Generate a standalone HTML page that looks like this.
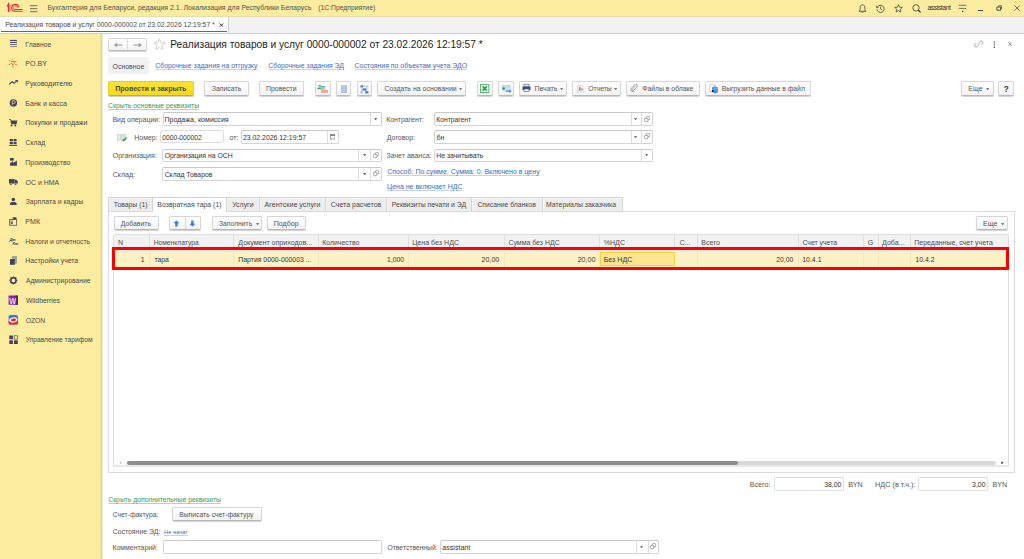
<!DOCTYPE html>
<html><head><meta charset="utf-8"><title>1C</title>
<style>
html,body{margin:0;padding:0;width:1024px;height:559px;overflow:hidden;background:#fff;}
body{position:relative;font-family:"Liberation Sans",sans-serif;}
div{position:absolute;box-sizing:border-box;}
.t{white-space:nowrap;line-height:1;}
.u{text-decoration:underline;text-decoration-thickness:0.6px;text-underline-offset:1.2px;}
.btn{background:linear-gradient(#ffffff,#f3f3f3);border:1px solid #d6d6d6;border-bottom-color:#b8b8b8;border-radius:2px;box-shadow:0 0.6px 0.8px rgba(0,0,0,0.18);}
.ybtn{background:linear-gradient(#fbe332,#f7da18);border:1px solid #ecd010;border-bottom-color:#cdb000;border-radius:2px;box-shadow:0 0.6px 0.8px rgba(0,0,0,0.2);}
.inp{background:#fff;border:1px solid #d3d3d3;border-top-color:#c9c9c9;border-radius:2px;}
.tab{background:#ededed;border:1px solid #d4d4d4;border-bottom:none;box-shadow:inset 1px 1px 0 #f6f6f6;}
</style></head><body>
<div style="left:0px;top:0px;width:1024px;height:16px;background:#fbec9f"></div>
<svg style="position:absolute;left:4px;top:2px" width="22" height="12" viewBox="0 0 22 12"><g fill="none" stroke="#e4262c">
<path d="M3.1 4.5L4.5 2.1V9.9" stroke-width="1.25"/><path d="M6.1 2.3V9.9" stroke-width="0.9" opacity="0.7"/>
<path d="M14.6 5.3A3.45 3.45 0 1 0 11.2 9.25" stroke-width="1.1"/><path d="M13.1 5.7A1.9 1.9 0 1 0 11 7.5" stroke-width="0.8" opacity="0.8"/>
<path d="M10.1 7.5H18.7M10.9 9.25H18.7" stroke-width="0.95"/></g></svg>
<svg style="position:absolute;left:30px;top:4.5px" width="8" height="8" viewBox="0 0 8 8"><path d="M0 0.7H7.5M0 3.7H7.5M0 6.7H7.5" stroke="#5e5e5e" stroke-width="0.9"/></svg>
<div class="t" style="left:47.44px;top:5px;font-size:6.962px;color:#4f4f4f;font-weight:normal;font-style:normal;">Бухгалтерия для Беларуси, редакция 2.1. Локализация для Республики Беларусь</div>
<div class="t" style="left:318.19px;top:5px;font-size:6.818px;color:#4f4f4f;font-weight:normal;font-style:normal;">(1С:Предприятие)</div>
<svg style="position:absolute;left:857.5px;top:4px" width="9" height="9" viewBox="0 0 9 9"><path d="M4.5 0.8C2.6 0.8 2.1 2.4 2.1 4.1V6L1 7.3H8L6.9 6V4.1C6.9 2.4 6.4 0.8 4.5 0.8Z" fill="none" stroke="#4a4a4a" stroke-width="0.85"/><path d="M3.6 8.2H5.4" stroke="#4a4a4a" stroke-width="0.9"/></svg>
<svg style="position:absolute;left:875.5px;top:4px" width="9" height="9" viewBox="0 0 9 9"><path d="M1.4 3.2A3.6 3.6 0 1 1 1 5.2" fill="none" stroke="#4a4a4a" stroke-width="0.85"/><path d="M0.6 1.6V3.6H2.6" fill="none" stroke="#4a4a4a" stroke-width="0.8"/><path d="M4.6 2.6V4.8L6 6" fill="none" stroke="#4a4a4a" stroke-width="0.85"/></svg>
<svg style="position:absolute;left:893.5px;top:3.6px" width="9" height="9" viewBox="0 0 9 9"><path d="M4.5 0.6L5.6 3.2L8.4 3.4L6.3 5.2L6.9 8L4.5 6.5L2.1 8L2.7 5.2L0.6 3.4L3.4 3.2Z" fill="none" stroke="#4a4a4a" stroke-width="0.8" stroke-linejoin="round"/></svg>
<svg style="position:absolute;left:911.5px;top:4px" width="9.5" height="9" viewBox="0 0 9.5 9"><circle cx="4" cy="3.9" r="3.2" fill="none" stroke="#4a4a4a" stroke-width="0.85"/><path d="M6.3 6.2L8.6 8.4" stroke="#2a2a2a" stroke-width="1.2"/></svg>
<div class="t" style="left:927.43px;top:5px;font-size:6.8px;color:#333333;font-weight:normal;font-style:normal;letter-spacing:-0.42px">assistant</div>
<svg style="position:absolute;left:957.5px;top:4px" width="9.5" height="8.5" viewBox="0 0 9.5 8.5"><path d="M0.8 1.3H8.3M0.8 4.4H8.3" stroke="#505050" stroke-width="0.8"/><rect x="4" y="6.8" width="1.4" height="1.1" fill="#3a3a3a"/></svg>
<div style="left:978.2px;top:9.8px;width:5px;height:0.9px;background:#444"></div>
<svg style="position:absolute;left:995.6px;top:5.4px" width="6.4" height="6" viewBox="0 0 6.4 6"><path d="M0.9 2H4.6V5.3H0.9Z" fill="none" stroke="#444" stroke-width="0.9"/><path d="M2.6 2V0.8H5.6V3.8H4.6" fill="none" stroke="#444" stroke-width="0.75"/></svg>
<svg style="position:absolute;left:1013.5px;top:5px" width="6.2" height="6.2" viewBox="0 0 6.2 6.2"><path d="M0.4 0.4L5.8 5.8M5.8 0.4L0.4 5.8" stroke="#555" stroke-width="0.85"/></svg>
<div style="left:0px;top:16px;width:1024px;height:17px;background:#f2f2f2"></div>
<div style="left:0px;top:33px;width:1024px;height:1px;background:#cfcfcf"></div>
<div style="left:0px;top:16px;width:229px;height:17px;background:#fff;border-right:1px solid #cfcfcf"></div>
<div style="left:0px;top:16px;width:1024px;height:1px;background:#e6deae"></div>
<div style="left:1px;top:30.8px;width:225.5px;height:1.2px;background:#16983f"></div>
<div class="t" style="left:5.25px;top:22px;font-size:6.839px;color:#4a4a4a;font-weight:normal;font-style:normal;">Реализация товаров и услуг 0000-000002 от 23.02.2026 12:19:57 *</div>
<svg style="position:absolute;left:219.4px;top:22.6px" width="4.8" height="4.4" viewBox="0 0 4.8 4.4"><path d="M0.4 0.4L4.4 4M4.4 0.4L0.4 4" stroke="#333" stroke-width="0.9"/></svg>
<div style="left:0px;top:34px;width:100px;height:525px;background:#fbec9f"></div>
<div style="left:100px;top:34px;width:1px;height:525px;background:#f1e290"></div>
<div style="left:101px;top:34px;width:1px;height:525px;background:#ddd6aa"></div>
<div style="left:102px;top:34px;width:1px;height:525px;background:#eeebdf"></div>
<div class="t" style="left:25.36px;top:42px;font-size:6.78px;color:#4a4a4a;font-weight:normal;font-style:normal;">Главное</div>
<div class="t" style="left:25.33px;top:61px;font-size:7.12px;color:#4a4a4a;font-weight:normal;font-style:normal;">PO.BY</div>
<div class="t" style="left:25.34px;top:80px;font-size:7.052px;color:#4a4a4a;font-weight:normal;font-style:normal;">Руководителю</div>
<div class="t" style="left:25.33px;top:101px;font-size:7.089px;color:#4a4a4a;font-weight:normal;font-style:normal;">Банк и касса</div>
<div class="t" style="left:25.34px;top:119px;font-size:7.014px;color:#4a4a4a;font-weight:normal;font-style:normal;">Покупки и продажи</div>
<div class="t" style="left:25.56px;top:140px;font-size:6.78px;color:#4a4a4a;font-weight:normal;font-style:normal;">Склад</div>
<div class="t" style="left:25.35px;top:160px;font-size:6.918px;color:#4a4a4a;font-weight:normal;font-style:normal;">Производство</div>
<div class="t" style="left:25.62px;top:180px;font-size:6.938px;color:#4a4a4a;font-weight:normal;font-style:normal;">ОС и НМА</div>
<div class="t" style="left:25.69px;top:199px;font-size:6.882px;color:#4a4a4a;font-weight:normal;font-style:normal;">Зарплата и кадры</div>
<div class="t" style="left:25.33px;top:219px;font-size:7.12px;color:#4a4a4a;font-weight:normal;font-style:normal;">РМК</div>
<div class="t" style="left:25.36px;top:239px;font-size:6.799px;color:#4a4a4a;font-weight:normal;font-style:normal;">Налоги и отчетность</div>
<div class="t" style="left:25.35px;top:258px;font-size:6.835px;color:#4a4a4a;font-weight:normal;font-style:normal;">Настройки учета</div>
<div class="t" style="left:25.90px;top:278px;font-size:6.79px;color:#4a4a4a;font-weight:normal;font-style:normal;">Администрирование</div>
<div class="t" style="left:25.90px;top:298px;font-size:6.84px;color:#4a4a4a;font-weight:normal;font-style:normal;">Wildberries</div>
<div class="t" style="left:25.63px;top:318px;font-size:6.78px;color:#4a4a4a;font-weight:normal;font-style:normal;">OZON</div>
<div class="t" style="left:25.77px;top:337px;font-size:6.664px;color:#4a4a4a;font-weight:normal;font-style:normal;">Управление тарифом</div>
<svg style="position:absolute;left:0;top:0" width="101" height="360" viewBox="0 0 101 360">
<g fill="none" stroke-linecap="butt">
<path d="M10 40.4H17" stroke="#45415a" stroke-width="1.05"/>
<path d="M10 42.45H17" stroke="#55506a" stroke-width="1.05"/>
<path d="M10 44.5H17" stroke="#6c6a72" stroke-width="1.05"/>
<path d="M10 46.55H17" stroke="#8c8e84" stroke-width="1.05"/>
</g>
<g fill="#e8483e">
<circle cx="12.6" cy="59.4" r="0.5"/><circle cx="9.4" cy="60.7" r="0.55"/><rect x="11" y="61.1" width="5.6" height="0.8"/>
<circle cx="11.3" cy="63.4" r="0.65"/><circle cx="14.4" cy="63.2" r="0.6"/><circle cx="9.4" cy="64.4" r="0.6"/>
<circle cx="12.6" cy="64.5" r="0.7"/><rect x="15.2" y="64" width="1.7" height="0.8"/><circle cx="12.6" cy="66.4" r="0.5"/>
</g>
<path d="M9.2 84.4L12.2 81.8L14.2 83.3L16.4 81.2" fill="none" stroke="#45415a" stroke-width="1.1"/>
<path d="M15 80.1H17.9V83Z" fill="#45415a"/>
<circle cx="13.4" cy="102.9" r="3.7" fill="#45415a"/>
<path d="M12.3 105.4V100.7H14A1.35 1.35 0 0 1 14 103.4H12.3" fill="none" stroke="#c9c7a8" stroke-width="0.85"/>
<path d="M9.2 119.5H10.6L11.2 120.6" fill="none" stroke="#45415a" stroke-width="0.9"/>
<path d="M10.3 120.4H17.4L16.5 124.2H11.2Z" fill="#45415a"/>
<circle cx="11.6" cy="125.5" r="0.95" fill="#45415a"/><circle cx="15.3" cy="125.5" r="0.95" fill="#45415a"/>
<rect x="9.7" y="138.9" width="3.2" height="2.3" rx="0.5" fill="#45415a"/><rect x="13.5" y="138.9" width="3.1" height="2.3" rx="0.5" fill="#45415a"/>
<rect x="9.7" y="141.9" width="3.2" height="2.3" rx="0.5" fill="#45415a"/><rect x="13.5" y="141.9" width="3.1" height="2.3" rx="0.5" fill="#45415a"/>
<rect x="9.2" y="145.1" width="7.8" height="0.9" fill="#45415a"/>
<rect x="10" y="158" width="3.7" height="2.6" fill="#45415a"/>
<path d="M10 165.7V163.2L13 160.9V162.9L16.9 160.6V165.7Z" fill="#45415a"/>
<path d="M9 179.1H14.6V183.6H9Z" fill="#45415a"/><path d="M14.6 179.8H16.4L17.8 181.4V183.6H14.6Z" fill="#45415a"/>
<circle cx="10.9" cy="184.2" r="1" fill="#45415a" stroke="#fbec9f" stroke-width="0.35"/><circle cx="15.6" cy="184.2" r="1" fill="#45415a" stroke="#fbec9f" stroke-width="0.35"/>
<circle cx="13.3" cy="199.4" r="1.75" fill="#45415a"/>
<path d="M10.1 205.1V203.6C10.1 202.6 11 202.1 13.3 202.1C15.6 202.1 16.6 202.6 16.6 203.6V205.1Z" fill="#45415a"/>
<rect x="9.6" y="219.5" width="7" height="5.8" fill="#fff3c0" stroke="#7a6446" stroke-width="0.95"/>
<rect x="12.6" y="217.2" width="4" height="2.8" fill="#7a6446"/><rect x="13.3" y="217.8" width="2.6" height="1.5" fill="#3f3b66"/>
<rect x="10.4" y="220.3" width="2.6" height="4.2" fill="#a8a490"/><circle cx="12" cy="220.8" r="0.6" fill="#d9c030"/><rect x="11.2" y="222.2" width="1.3" height="1.6" fill="#3f3b66"/>
<text x="9.4" y="241" font-family="Liberation Sans" font-weight="bold" font-style="italic" font-size="3.9" fill="#3f3b55" letter-spacing="-0.25">Дт</text>
<text x="12.6" y="245" font-family="Liberation Sans" font-weight="bold" font-style="italic" font-size="3.9" fill="#3f3b55" letter-spacing="-0.25">Кт</text>
<path d="M11.3 257.1L12.6 256H17V262.6L15.6 264.2Z" fill="#9ea392"/>
<rect x="10" y="259" width="4.8" height="5.8" fill="#45415a"/>
<g transform="translate(13.4 280.4)"><circle r="2.6" fill="none" stroke="#45415a" stroke-width="1.5"/>
<path d="M0 -4V-2.6M0 2.6V4M-4 0H-2.6M2.6 0H4M-2.85 -2.85L-1.85 -1.85M1.85 1.85L2.85 2.85M-2.85 2.85L-1.85 1.85M1.85 -1.85L2.85 -2.85" stroke="#45415a" stroke-width="1.3"/></g>
<rect x="8.6" y="295.5" width="9.3" height="9.3" rx="0.8" fill="#8c1ea6"/><rect x="15.6" y="295.5" width="2.3" height="9.3" fill="#3a2a5a"/>
<text x="9.2" y="304" font-family="Liberation Sans" font-weight="bold" font-size="8.6" fill="#eadcf0" transform="translate(9.2 304) scale(0.85 1) translate(-9.2 -304)">W</text>
<rect x="8.6" y="315" width="9.3" height="9.6" rx="1.6" fill="#3a78e0"/>
<path d="M8.6 321.4L17.9 320.6V323A1.6 1.6 0 0 1 16.3 324.6H10.2A1.6 1.6 0 0 1 8.6 323Z" fill="#ee2028"/>
<ellipse cx="13.25" cy="320" rx="4" ry="2.6" fill="#fff" transform="rotate(-8 13.25 320)"/><ellipse cx="13.4" cy="320" rx="2.7" ry="1.4" fill="#e8242c" transform="rotate(-8 13.25 320)"/>
<rect x="9.3" y="335.5" width="3.6" height="3.7" fill="#45415a"/><rect x="14.1" y="335.8" width="3.4" height="3.3" fill="none" stroke="#45415a" stroke-width="0.65"/>
<rect x="9.3" y="340.3" width="3.6" height="3.7" fill="#45415a"/><rect x="14" y="340.3" width="3.8" height="3.7" fill="#45415a"/>
</svg>
<div class="btn" style="left:108px;top:38px;width:39px;height:12.5px"></div>
<div style="left:127px;top:38.6px;width:0.8px;height:11.4px;background:#dcdcdc"></div>
<svg style="position:absolute;left:112.5px;top:41.5px" width="10" height="6" viewBox="0 0 10 6"><path d="M3.2 3H9.3" stroke="#a0a0a0" stroke-width="1.1"/><path d="M0.9 3L4.2 0.6V5.4Z" fill="#a0a0a0"/></svg>
<svg style="position:absolute;left:132.5px;top:41.5px" width="10" height="6" viewBox="0 0 10 6"><path d="M0.6 3H6.6" stroke="#a0a0a0" stroke-width="1.1"/><path d="M9 3L5.7 0.6V5.4Z" fill="#a0a0a0"/></svg>
<svg style="position:absolute;left:152.6px;top:38.2px" width="13" height="12.4" viewBox="0 0 13 12.4"><path d="M6.5 0.9L8.1 4.6L12.1 4.9L9.1 7.5L10 11.6L6.5 9.4L3 11.6L3.9 7.5L0.9 4.9L4.9 4.6Z" fill="none" stroke="#c4c4c4" stroke-width="0.8" stroke-linejoin="round"/></svg>
<div class="t" style="left:170.18px;top:40px;font-size:10.193px;color:#222222;font-weight:normal;font-style:normal;">Реализация товаров и услуг 0000-000002 от 23.02.2026 12:19:57 *</div>
<svg style="position:absolute;left:973.6px;top:40px" width="10" height="8.2" viewBox="0 0 10 8.2"><g fill="none" stroke="#8a8a8a" stroke-width="0.8"><path d="M4.2 5.6L3.1 6.8A1.6 1.6 0 0 1 0.9 4.6L2.2 3.3"/><path d="M5.2 2.5L6.4 1.3A1.6 1.6 0 0 1 8.6 3.5L7.3 4.8"/><path d="M3.4 5.2L6 2.7"/></g></svg>
<svg style="position:absolute;left:992.9px;top:40.6px" width="2.6" height="7.4" viewBox="0 0 2.6 7.4"><path d="M1.3 0.9V6.5" stroke="#8a8a8a" stroke-width="0.7"/><rect x="0.7" y="0.4" width="1.2" height="1.2" fill="#555"/><rect x="0.7" y="5.8" width="1.2" height="1.2" fill="#555"/><rect x="0.8" y="3.1" width="1" height="1.1" fill="#777"/></svg>
<svg style="position:absolute;left:1008.1px;top:41.8px" width="4.4" height="4.4" viewBox="0 0 4.4 4.4"><path d="M0.4 0.4L4 4M4 0.4L0.4 4" stroke="#777" stroke-width="0.8"/></svg>
<div style="left:108px;top:56.8px;width:40.75px;height:17.6px;background:#f1f1f1;border-radius:1.5px"></div>
<div class="t" style="left:112.62px;top:64px;font-size:6.924px;color:#4a4a4a;font-weight:normal;font-style:normal;">Основное</div>
<div class="t" style="left:155.26px;top:63px;font-size:6.886px;color:#3a6cc0;font-weight:normal;font-style:normal;text-decoration:underline;text-decoration-color:#c3d3ee;text-decoration-thickness:0.7px;text-underline-offset:0.5px">Сборочные задания на отгрузку</div>
<div class="t" style="left:268.26px;top:63px;font-size:6.897px;color:#3a6cc0;font-weight:normal;font-style:normal;text-decoration:underline;text-decoration-color:#c3d3ee;text-decoration-thickness:0.7px;text-underline-offset:0.5px">Сборочные задания ЭД</div>
<div class="t" style="left:354.55px;top:63px;font-size:6.924px;color:#3a6cc0;font-weight:normal;font-style:normal;text-decoration:underline;text-decoration-color:#c3d3ee;text-decoration-thickness:0.7px;text-underline-offset:0.5px">Состояния по объектам учета ЭДО</div>
<div class="ybtn" style="left:108px;top:81px;width:85.7px;height:14.599999999999994px"></div>
<div class="t" style="left:115.17px;top:86px;font-size:7.119px;color:#4a4954;font-weight:bold;font-style:normal;">Провести и закрыть</div>
<div class="btn" style="left:204.3px;top:81px;width:44.39999999999998px;height:14.599999999999994px"></div>
<div class="t" style="left:211.69px;top:86px;font-size:6.948px;color:#555555;font-weight:normal;font-style:normal;">Записать</div>
<div class="btn" style="left:259.4px;top:81px;width:44.400000000000034px;height:14.599999999999994px"></div>
<div class="t" style="left:266.05px;top:86px;font-size:6.9px;color:#555555;font-weight:normal;font-style:normal;">Провести</div>
<div class="btn" style="left:315px;top:81px;width:15.699999999999989px;height:14.599999999999994px"></div>
<svg style="position:absolute;left:317px;top:83.5px" width="12" height="10" viewBox="0 0 12 10"><text x="0.6" y="4.6" font-family="Liberation Sans" font-weight="bold" font-style="italic" font-size="4.6" fill="#2c9c4c" letter-spacing="-0.2">Дт</text><text x="4.3" y="8.8" font-family="Liberation Sans" font-weight="bold" font-style="italic" font-size="4.6" fill="#f0643c" letter-spacing="-0.2">Кт</text></svg>
<div class="btn" style="left:335.7px;top:81px;width:15.800000000000011px;height:14.599999999999994px"></div>
<svg style="position:absolute;left:340.5px;top:84.5px" width="6.5" height="8.5" viewBox="0 0 6.5 8.5"><rect x="0.4" y="0.3" width="5.6" height="7.9" fill="#a9b9d6"/><path d="M0.4 2.1H6M0.4 4.2H6M0.4 6.3H6" stroke="#d8e2f0" stroke-width="0.7"/><path d="M0.4 0.3V8.2M6 0.3V8.2" stroke="#8ea0c4" stroke-width="0.5"/></svg>
<div class="btn" style="left:356.6px;top:81px;width:15.799999999999955px;height:14.599999999999994px"></div>
<svg style="position:absolute;left:360px;top:84.5px" width="9" height="9" viewBox="0 0 9 9"><g fill="#4d78c2"><rect x="0.4" y="0.4" width="2.8" height="2"/><rect x="3.6" y="0.4" width="1.6" height="1.4" fill="#8fb0e0"/><rect x="6" y="0.6" width="2.2" height="1.6" fill="#a9c2e8"/><rect x="2.6" y="3.4" width="3.6" height="2.2"/><rect x="0.4" y="6.4" width="2.4" height="2" fill="#a9c2e8"/><rect x="5.2" y="6.2" width="3.2" height="2.2"/></g><path d="M1.8 2.4V6.4M6.6 2.2V6.2" stroke="#7b9bd6" stroke-width="0.6"/></svg>
<div class="btn" style="left:377.4px;top:81px;width:88.90000000000003px;height:14.599999999999994px"></div>
<div class="t" style="left:384.55px;top:86px;font-size:6.962px;color:#555555;font-weight:normal;font-style:normal;">Создать на основании</div>
<svg style="position:absolute;left:459.4px;top:87.8px" width="3.2" height="2.2" viewBox="0 0 3.2 2.2"><path d="M0 0.2H3.2L1.6 2Z" fill="#555"/></svg>
<div class="btn" style="left:477.4px;top:81px;width:15.5px;height:14.599999999999994px"></div>
<svg style="position:absolute;left:480.3px;top:84px" width="9.5" height="9" viewBox="0 0 9.5 9"><rect x="0.5" y="0.5" width="8.4" height="8" fill="#d6eedc" stroke="#5fba78" stroke-width="1"/><rect x="1.8" y="1.6" width="5.8" height="5.8" fill="#fff"/><path d="M2.6 2.4L6.8 6.6M6.8 2.4L2.6 6.6" stroke="#1e9a44" stroke-width="1.5"/></svg>
<div class="btn" style="left:498.2px;top:81px;width:15.800000000000011px;height:14.599999999999994px"></div>
<svg style="position:absolute;left:501.5px;top:84.5px" width="10" height="8" viewBox="0 0 10 8"><rect x="0.6" y="0.4" width="7.6" height="4.8" fill="#cfe2f6" stroke="#9cc0e8" stroke-width="0.5"/><path d="M1 0.8L4.4 3.2L7.8 0.8" fill="none" stroke="#9cc0e8" stroke-width="0.5"/><circle cx="1.6" cy="3.4" r="1.25" fill="#2a9c4a"/><path d="M3.6 6.2H8.4" stroke="#3a7fd6" stroke-width="1.1"/><path d="M7.4 4.4L9.6 6.2L7.4 8Z" fill="#3a7fd6"/></svg>
<div class="btn" style="left:518.6px;top:81px;width:48.19999999999993px;height:14.599999999999994px"></div>
<svg style="position:absolute;left:522.3px;top:84.4px" width="9" height="8" viewBox="0 0 9 8"><rect x="2" y="0.4" width="5" height="2.4" fill="#fff" stroke="#3c4f80" stroke-width="0.6"/><rect x="0.5" y="2.6" width="8" height="3.6" rx="0.6" fill="#3c4f80"/><rect x="2" y="5" width="5" height="2.6" fill="#fff" stroke="#3c4f80" stroke-width="0.6"/></svg>
<div class="t" style="left:534.44px;top:86px;font-size:6.973px;color:#555555;font-weight:normal;font-style:normal;">Печать</div>
<svg style="position:absolute;left:560.1999999999999px;top:87.8px" width="3.2" height="2.2" viewBox="0 0 3.2 2.2"><path d="M0 0.2H3.2L1.6 2Z" fill="#555"/></svg>
<div class="btn" style="left:572.3px;top:81px;width:48.5px;height:14.599999999999994px"></div>
<svg style="position:absolute;left:576.6px;top:84.6px" width="7.4" height="8.4" viewBox="0 0 7.4 8.4"><path d="M0.6 0.5H5L6.8 2.3V7.8H0.6Z" fill="#fff" stroke="#c4c4c4" stroke-width="0.6"/><rect x="2.2" y="2" width="1.3" height="3.6" fill="#e8332a"/><rect x="4.3" y="3.4" width="1.3" height="2.2" fill="#2fae5a"/><rect x="1.4" y="5.2" width="0.6" height="0.6" fill="#3a5aa0"/></svg>
<div class="t" style="left:588.33px;top:86px;font-size:6.78px;color:#555555;font-weight:normal;font-style:normal;">Отчеты</div>
<svg style="position:absolute;left:613.9px;top:87.8px" width="3.2" height="2.2" viewBox="0 0 3.2 2.2"><path d="M0 0.2H3.2L1.6 2Z" fill="#555"/></svg>
<div class="btn" style="left:626.25px;top:81px;width:73.75px;height:14.599999999999994px"></div>
<svg style="position:absolute;left:629.8px;top:84.4px" width="8" height="8" viewBox="0 0 8 8"><path d="M5.6 2.4L2.3 5.7A0.9 0.9 0 0 0 3.6 7L6.9 3.7A1.6 1.6 0 0 0 4.6 1.4L1.2 4.8A2.3 2.3 0 0 0 4.4 8" fill="none" stroke="#8a8a8a" stroke-width="0.8" transform="translate(0 -0.6)"/></svg>
<div class="t" style="left:642.26px;top:86px;font-size:6.832px;color:#555555;font-weight:normal;font-style:normal;">Файлы в облаке</div>
<div class="btn" style="left:705.3px;top:81px;width:106.10000000000002px;height:14.599999999999994px"></div>
<svg style="position:absolute;left:708.6px;top:83.8px" width="10.5" height="10" viewBox="0 0 10.5 10"><path d="M0.8 0.6H4.6L5.6 1.6V7.6H0.8Z" fill="#fff" stroke="#b8b8b8" stroke-width="0.7"/><path d="M2.8 3.4L5.2 2.2L8.9 3.6V8.6L6 9.4L3.6 8.2Z" fill="#4f8fe0"/><path d="M5.2 2.2L5.6 5.6L8.9 4.2" fill="none" stroke="#a8c8f0" stroke-width="0.5"/><circle cx="3.7" cy="7" r="0.9" fill="#111"/><path d="M5.6 1L6.6 2" stroke="#555" stroke-width="0.6"/></svg>
<div class="t" style="left:721.65px;top:86px;font-size:6.837px;color:#555555;font-weight:normal;font-style:normal;">Выгрузить данные в файл</div>
<div class="btn" style="left:961.25px;top:81px;width:32.5px;height:14.599999999999994px"></div>
<div class="t" style="left:968.18px;top:86px;font-size:7.12px;color:#555555;font-weight:normal;font-style:normal;">Еще</div>
<svg style="position:absolute;left:986.1999999999999px;top:87.8px" width="3.2" height="2.2" viewBox="0 0 3.2 2.2"><path d="M0 0.2H3.2L1.6 2Z" fill="#555"/></svg>
<div class="btn" style="left:998px;top:81px;width:16px;height:14.599999999999994px"></div>
<div class="t" style="left:1003.67px;top:86px;font-size:8.2px;color:#333;font-weight:bold;font-style:normal;">?</div>
<div class="t" style="left:108.06px;top:103px;font-size:6.837px;color:#2f9c57;font-weight:normal;font-style:normal;text-decoration:underline;text-decoration-color:#aad8bb;text-decoration-thickness:0.7px;text-underline-offset:0.5px">Скрыть основные реквизиты</div>
<div class="t" style="left:112.44px;top:116px;font-size:7.004px;color:#555555;font-weight:normal;font-style:normal;">Вид операции:</div>
<div class="inp" style="left:162.9px;top:112.4px;width:219.1px;height:13.49999999999999px;"></div>
<div style="left:370.3px;top:112.9px;width:1px;height:12.699999999999989px;background:#dcdcdc"></div>
<svg style="position:absolute;left:374.29999999999995px;top:117.7px" width="3.2" height="2.2" viewBox="0 0 3.2 2.2"><path d="M0 0.2H3.2L1.6 2Z" fill="#444"/></svg>
<div class="t" style="left:164.43px;top:117px;font-size:7.081px;color:#333;font-weight:normal;font-style:normal;">Продажа, комиссия</div>
<div class="t" style="left:386.15px;top:117px;font-size:6.931px;color:#555555;font-weight:normal;font-style:normal;">Контрагент:</div>
<div class="inp" style="left:434.3px;top:112.4px;width:218.7px;height:13.49999999999999px;"></div>
<div style="left:630.5px;top:112.9px;width:1px;height:12.699999999999989px;background:#dcdcdc"></div>
<div style="left:641.4px;top:112.9px;width:1px;height:12.699999999999989px;background:#dcdcdc"></div>
<svg style="position:absolute;left:634.4px;top:117.7px" width="3.2" height="2.2" viewBox="0 0 3.2 2.2"><path d="M0 0.2H3.2L1.6 2Z" fill="#444"/></svg>
<svg style="position:absolute;left:644px;top:115.5px" width="6.4" height="6.4" viewBox="0 0 6.4 6.4"><rect x="2.4" y="0.5" width="3.3" height="3.3" rx="1.1" fill="none" stroke="#7e7e7e" stroke-width="0.75"/><rect x="0.5" y="2.3" width="3.4" height="3.4" rx="1.1" fill="#fff" stroke="#7e7e7e" stroke-width="0.75"/></svg>
<div class="t" style="left:436.26px;top:117px;font-size:6.749px;color:#333;font-weight:normal;font-style:normal;">Контрагент</div>
<svg style="position:absolute;left:116.6px;top:134.4px" width="10.5" height="7.5" viewBox="0 0 10.5 7.5"><rect x="0.5" y="0.5" width="7.8" height="5.6" fill="#dcdcdc" stroke="#c8c8c8" stroke-width="0.6"/><rect x="1.6" y="1.4" width="1.1" height="3.8" fill="#f6f6f6"/><path d="M5.6 5.4L6.9 6.6L9.6 3.6" fill="none" stroke="#3aa55a" stroke-width="1.5"/></svg>
<div class="t" style="left:134.35px;top:135px;font-size:6.932px;color:#555555;font-weight:normal;font-style:normal;">Номер:</div>
<div class="inp" style="left:160.3px;top:130.4px;width:64.1px;height:13.0px;border-color:#dedede"></div>
<div class="t" style="left:162.20px;top:135px;font-size:6.72px;color:#333;font-weight:normal;font-style:normal;">0000-000002</div>
<div class="t" style="left:229.52px;top:135px;font-size:7.12px;color:#555555;font-weight:normal;font-style:normal;">от:</div>
<div class="inp" style="left:241px;top:130.4px;width:97.80000000000001px;height:13.3px;"></div>
<div style="left:326.6px;top:130.9px;width:1px;height:12.5px;background:#dcdcdc"></div>
<div class="t" style="left:242.96px;top:135px;font-size:6.895px;color:#333;font-weight:normal;font-style:normal;">23.02.2026 12:19:57</div>
<svg style="position:absolute;left:329.6px;top:134.2px" width="5.5" height="5.5" viewBox="0 0 5.5 5.5"><rect x="0.4" y="0.6" width="4.6" height="4.4" fill="none" stroke="#777" stroke-width="0.7"/><rect x="0.4" y="0.6" width="4.6" height="1.3" fill="#777"/></svg>
<div class="t" style="left:386.70px;top:134px;font-size:7.01px;color:#555555;font-weight:normal;font-style:normal;">Договор:</div>
<div class="inp" style="left:434.3px;top:130.4px;width:218.7px;height:13.3px;"></div>
<div style="left:630.5px;top:130.9px;width:1px;height:12.5px;background:#dcdcdc"></div>
<div style="left:641.4px;top:130.9px;width:1px;height:12.5px;background:#dcdcdc"></div>
<svg style="position:absolute;left:634.4px;top:135.6px" width="3.2" height="2.2" viewBox="0 0 3.2 2.2"><path d="M0 0.2H3.2L1.6 2Z" fill="#444"/></svg>
<svg style="position:absolute;left:644px;top:133.4px" width="6.4" height="6.4" viewBox="0 0 6.4 6.4"><rect x="2.4" y="0.5" width="3.3" height="3.3" rx="1.1" fill="none" stroke="#7e7e7e" stroke-width="0.75"/><rect x="0.5" y="2.3" width="3.4" height="3.4" rx="1.1" fill="#fff" stroke="#7e7e7e" stroke-width="0.75"/></svg>
<div class="t" style="left:436.44px;top:135px;font-size:7.109px;color:#333;font-weight:normal;font-style:normal;">бн</div>
<div class="t" style="left:112.72px;top:153px;font-size:6.973px;color:#555555;font-weight:normal;font-style:normal;">Организация:</div>
<div class="inp" style="left:162.4px;top:149px;width:219.6px;height:13.100000000000012px;"></div>
<div style="left:358.4px;top:149.5px;width:1px;height:12.300000000000011px;background:#dcdcdc"></div>
<div style="left:370.3px;top:149.5px;width:1px;height:12.300000000000011px;background:#dcdcdc"></div>
<svg style="position:absolute;left:362.79999999999995px;top:154.1px" width="3.2" height="2.2" viewBox="0 0 3.2 2.2"><path d="M0 0.2H3.2L1.6 2Z" fill="#444"/></svg>
<svg style="position:absolute;left:373px;top:151.9px" width="6.4" height="6.4" viewBox="0 0 6.4 6.4"><rect x="2.4" y="0.5" width="3.3" height="3.3" rx="1.1" fill="none" stroke="#7e7e7e" stroke-width="0.75"/><rect x="0.5" y="2.3" width="3.4" height="3.4" rx="1.1" fill="#fff" stroke="#7e7e7e" stroke-width="0.75"/></svg>
<div class="t" style="left:164.73px;top:153px;font-size:6.874px;color:#333;font-weight:normal;font-style:normal;">Организация на ОСН</div>
<div class="t" style="left:386.49px;top:152px;font-size:7.011px;color:#555555;font-weight:normal;font-style:normal;">Зачет аванса:</div>
<div class="inp" style="left:434.3px;top:149px;width:218.7px;height:13.100000000000012px;"></div>
<div style="left:641.4px;top:149.5px;width:1px;height:12.300000000000011px;background:#dcdcdc"></div>
<svg style="position:absolute;left:645.4px;top:154.1px" width="3.2" height="2.2" viewBox="0 0 3.2 2.2"><path d="M0 0.2H3.2L1.6 2Z" fill="#444"/></svg>
<div class="t" style="left:436.25px;top:153px;font-size:6.878px;color:#333;font-weight:normal;font-style:normal;">Не зачитывать</div>
<div class="t" style="left:112.64px;top:172px;font-size:7.12px;color:#555555;font-weight:normal;font-style:normal;">Склад:</div>
<div class="inp" style="left:162.4px;top:167.3px;width:219.6px;height:13.3px;"></div>
<div style="left:358.4px;top:167.8px;width:1px;height:12.5px;background:#dcdcdc"></div>
<div style="left:370.3px;top:167.8px;width:1px;height:12.5px;background:#dcdcdc"></div>
<svg style="position:absolute;left:362.79999999999995px;top:172.5px" width="3.2" height="2.2" viewBox="0 0 3.2 2.2"><path d="M0 0.2H3.2L1.6 2Z" fill="#444"/></svg>
<svg style="position:absolute;left:373px;top:170.3px" width="6.4" height="6.4" viewBox="0 0 6.4 6.4"><rect x="2.4" y="0.5" width="3.3" height="3.3" rx="1.1" fill="none" stroke="#7e7e7e" stroke-width="0.75"/><rect x="0.5" y="2.3" width="3.4" height="3.4" rx="1.1" fill="#fff" stroke="#7e7e7e" stroke-width="0.75"/></svg>
<div class="t" style="left:164.66px;top:172px;font-size:6.851px;color:#333;font-weight:normal;font-style:normal;">Склад Товаров</div>
<div class="t" style="left:387.25px;top:168px;font-size:7.032px;color:#3a6cc0;font-weight:normal;font-style:normal;text-decoration:underline;text-decoration-color:#c3d3ee;text-decoration-thickness:0.7px;text-underline-offset:0.5px">Способ: По сумме. Сумма: 0. Включено в цену</div>
<div class="t" style="left:387.04px;top:183px;font-size:6.978px;color:#3a6cc0;font-weight:normal;font-style:normal;text-decoration:underline;text-decoration-color:#c3d3ee;text-decoration-thickness:0.7px;text-underline-offset:0.5px">Цена не включает НДС</div>
<div style="left:108px;top:211.3px;width:907px;height:261.9px;border:1px solid #dadada;background:#fff"></div>
<div class="tab" style="left:108.3px;top:197.3px;width:45.10000000000001px;height:14.199999999999989px"></div>
<div style="left:152.4px;top:197.3px;width:75.0px;height:15.199999999999989px;background:#fff;border:1px solid #d2d2d2;border-bottom:none"></div>
<div class="tab" style="left:226.4px;top:197.3px;width:33.79999999999998px;height:14.199999999999989px"></div>
<div class="tab" style="left:259.2px;top:197.3px;width:66.80000000000001px;height:14.199999999999989px"></div>
<div class="tab" style="left:325px;top:197.3px;width:62.19999999999999px;height:14.199999999999989px"></div>
<div class="tab" style="left:386.2px;top:197.3px;width:86.19999999999999px;height:14.199999999999989px"></div>
<div class="tab" style="left:471.4px;top:197.3px;width:71.30000000000007px;height:14.199999999999989px"></div>
<div class="tab" style="left:541.7px;top:197.3px;width:81.0px;height:14.199999999999989px"></div>
<div class="t" style="left:113.76px;top:202px;font-size:6.842px;color:#4a4a4a;font-weight:normal;font-style:normal;">Товары (1)</div>
<div class="t" style="left:157.35px;top:202px;font-size:6.921px;color:#4a4a4a;font-weight:normal;font-style:normal;">Возвратная тара (1)</div>
<div class="t" style="left:232.16px;top:202px;font-size:6.964px;color:#4a4a4a;font-weight:normal;font-style:normal;">Услуги</div>
<div class="t" style="left:264.60px;top:202px;font-size:7.108px;color:#4a4a4a;font-weight:normal;font-style:normal;">Агентские услуги</div>
<div class="t" style="left:330.85px;top:201px;font-size:6.991px;color:#4a4a4a;font-weight:normal;font-style:normal;">Счета расчетов</div>
<div class="t" style="left:391.75px;top:202px;font-size:6.92px;color:#4a4a4a;font-weight:normal;font-style:normal;">Реквизиты печати и ЭД</div>
<div class="t" style="left:477.46px;top:202px;font-size:6.81px;color:#4a4a4a;font-weight:normal;font-style:normal;">Списание бланков</div>
<div class="t" style="left:546.05px;top:202px;font-size:6.884px;color:#4a4a4a;font-weight:normal;font-style:normal;">Материалы заказчика</div>
<div class="btn" style="left:113.6px;top:216.4px;width:45.0px;height:13.599999999999994px"></div>
<div class="t" style="left:120.70px;top:221px;font-size:6.875px;color:#555555;font-weight:normal;font-style:normal;">Добавить</div>
<div class="btn" style="left:169.3px;top:216.4px;width:31.399999999999977px;height:13.599999999999994px"></div>
<div style="left:185.2px;top:217.0px;width:0.8px;height:12.399999999999995px;background:#d8d8d8"></div>
<svg style="position:absolute;left:173.4px;top:219.6px" width="7" height="7" viewBox="0 0 7 7"><path d="M3.4 0.4L6.2 3.1L4.6 3.6V6.6H2.2V3.6L0.6 3.1Z" fill="#3a7ddc"/></svg>
<svg style="position:absolute;left:188.8px;top:219.6px" width="7" height="7" viewBox="0 0 7 7"><path d="M3.4 6.6L6.2 3.9L4.6 3.4V0.4H2.2V3.4L0.6 3.9Z" fill="#3a7ddc"/></svg>
<div class="btn" style="left:212.1px;top:216.4px;width:50.400000000000006px;height:13.599999999999994px"></div>
<div class="t" style="left:219.00px;top:221px;font-size:6.78px;color:#555555;font-weight:normal;font-style:normal;">Заполнить</div>
<svg style="position:absolute;left:255.6px;top:222.5px" width="3.2" height="2.2" viewBox="0 0 3.2 2.2"><path d="M0 0.2H3.2L1.6 2Z" fill="#555"/></svg>
<div class="btn" style="left:267.4px;top:216.4px;width:38.60000000000002px;height:13.599999999999994px"></div>
<div class="t" style="left:273.63px;top:221px;font-size:7.12px;color:#555555;font-weight:normal;font-style:normal;">Подбор</div>
<div class="btn" style="left:976.4px;top:216.4px;width:32.10000000000002px;height:13.599999999999994px"></div>
<div class="t" style="left:983.03px;top:221px;font-size:7.12px;color:#555555;font-weight:normal;font-style:normal;">Еще</div>
<svg style="position:absolute;left:1001.1999999999999px;top:222.5px" width="3.2" height="2.2" viewBox="0 0 3.2 2.2"><path d="M0 0.2H3.2L1.6 2Z" fill="#555"/></svg>
<div style="left:113.3px;top:234.4px;width:895.3000000000001px;height:232.4px;border:1px solid #dcdcdc;border-radius:1.5px;background:#fff"></div>
<div style="left:114.3px;top:235.4px;width:893.3000000000001px;height:12.6px;background:#f2f2f2"></div>
<div style="left:149.0px;top:235.4px;width:1px;height:12.6px;background:#dedede"></div>
<div style="left:233.2px;top:235.4px;width:1px;height:12.6px;background:#dedede"></div>
<div style="left:318.2px;top:235.4px;width:1px;height:12.6px;background:#dedede"></div>
<div style="left:408.0px;top:235.4px;width:1px;height:12.6px;background:#dedede"></div>
<div style="left:503.5px;top:235.4px;width:1px;height:12.6px;background:#dedede"></div>
<div style="left:599.1px;top:235.4px;width:1px;height:12.6px;background:#dedede"></div>
<div style="left:674.2px;top:235.4px;width:1px;height:12.6px;background:#dedede"></div>
<div style="left:697.1px;top:235.4px;width:1px;height:12.6px;background:#dedede"></div>
<div style="left:797.9px;top:235.4px;width:1px;height:12.6px;background:#dedede"></div>
<div style="left:863.1px;top:235.4px;width:1px;height:12.6px;background:#dedede"></div>
<div style="left:878.4px;top:235.4px;width:1px;height:12.6px;background:#dedede"></div>
<div style="left:910.4px;top:235.4px;width:1px;height:12.6px;background:#dedede"></div>
<div class="t" style="left:118.03px;top:240px;font-size:7.12px;color:#4d4d4d;font-weight:normal;font-style:normal;">N</div>
<div class="t" style="left:153.66px;top:240px;font-size:6.722px;color:#4d4d4d;font-weight:normal;font-style:normal;">Номенклатура</div>
<div class="t" style="left:238.30px;top:239px;font-size:7.071px;color:#4d4d4d;font-weight:normal;font-style:normal;">Документ оприходов...</div>
<div class="t" style="left:322.14px;top:240px;font-size:6.966px;color:#4d4d4d;font-weight:normal;font-style:normal;">Количество</div>
<div class="t" style="left:412.13px;top:240px;font-size:7.097px;color:#4d4d4d;font-weight:normal;font-style:normal;">Цена без НДС</div>
<div class="t" style="left:508.45px;top:240px;font-size:6.967px;color:#4d4d4d;font-weight:normal;font-style:normal;">Сумма без НДС</div>
<div class="t" style="left:603.69px;top:240px;font-size:7.088px;color:#4d4d4d;font-weight:normal;font-style:normal;">%НДС</div>
<div class="t" style="left:679.44px;top:240px;font-size:7.12px;color:#4d4d4d;font-weight:normal;font-style:normal;">С...</div>
<div class="t" style="left:701.33px;top:240px;font-size:7.12px;color:#4d4d4d;font-weight:normal;font-style:normal;">Всего</div>
<div class="t" style="left:802.46px;top:240px;font-size:6.872px;color:#4d4d4d;font-weight:normal;font-style:normal;">Счет учета</div>
<div class="t" style="left:867.74px;top:240px;font-size:7.12px;color:#4d4d4d;font-weight:normal;font-style:normal;">G</div>
<div class="t" style="left:882.00px;top:240px;font-size:7.12px;color:#4d4d4d;font-weight:normal;font-style:normal;">Доба...</div>
<div class="t" style="left:914.34px;top:239px;font-size:6.986px;color:#4d4d4d;font-weight:normal;font-style:normal;">Переданные, счет учета</div>
<div style="left:114.3px;top:250px;width:893.3000000000001px;height:2px;background:#e9e9e9"></div>
<div style="left:114.3px;top:252px;width:893.3000000000001px;height:14.6px;background:#fdf1c6"></div>
<div style="left:149.0px;top:252px;width:1px;height:14.6px;background:#f3e6bb"></div>
<div style="left:233.2px;top:252px;width:1px;height:14.6px;background:#f3e6bb"></div>
<div style="left:318.2px;top:252px;width:1px;height:14.6px;background:#f3e6bb"></div>
<div style="left:408.0px;top:252px;width:1px;height:14.6px;background:#f3e6bb"></div>
<div style="left:503.5px;top:252px;width:1px;height:14.6px;background:#f3e6bb"></div>
<div style="left:599.1px;top:252px;width:1px;height:14.6px;background:#f3e6bb"></div>
<div style="left:674.2px;top:252px;width:1px;height:14.6px;background:#f3e6bb"></div>
<div style="left:697.1px;top:252px;width:1px;height:14.6px;background:#f3e6bb"></div>
<div style="left:797.9px;top:252px;width:1px;height:14.6px;background:#f3e6bb"></div>
<div style="left:863.1px;top:252px;width:1px;height:14.6px;background:#f3e6bb"></div>
<div style="left:878.4px;top:252px;width:1px;height:14.6px;background:#f3e6bb"></div>
<div style="left:910.4px;top:252px;width:1px;height:14.6px;background:#f3e6bb"></div>
<div style="left:599.8px;top:251.6px;width:75px;height:14.2px;background:#fbe592;border:1px solid #f2d23a"></div>
<div class="t" style="left:140.78px;top:257px;font-size:6.9px;color:#333;font-weight:normal;font-style:normal;">1</div>
<div class="t" style="left:154.43px;top:257px;font-size:6.78px;color:#333;font-weight:normal;font-style:normal;">тара</div>
<div class="t" style="left:238.35px;top:257px;font-size:6.878px;color:#333;font-weight:normal;font-style:normal;">Партия 0000-000003 ...</div>
<div class="t" style="left:387.12px;top:257px;font-size:6.802px;color:#333;font-weight:normal;font-style:normal;">1,000</div>
<div class="t" style="left:481.54px;top:257px;font-size:7.12px;color:#333;font-weight:normal;font-style:normal;">20,00</div>
<div class="t" style="left:577.64px;top:257px;font-size:7.12px;color:#333;font-weight:normal;font-style:normal;">20,00</div>
<div class="t" style="left:603.73px;top:256px;font-size:7.063px;color:#333;font-weight:normal;font-style:normal;">Без НДС</div>
<div class="t" style="left:776.16px;top:257px;font-size:6.829px;color:#333;font-weight:normal;font-style:normal;">20,00</div>
<div class="t" style="left:802.21px;top:257px;font-size:6.944px;color:#333;font-weight:normal;font-style:normal;">10.4.1</div>
<div class="t" style="left:915.31px;top:256px;font-size:6.982px;color:#333;font-weight:normal;font-style:normal;">10.4.2</div>
<div style="left:112px;top:247px;width:897px;height:23px;border:3px solid #ff0000"></div>
<div style="left:114.3px;top:465.4px;width:893.3000000000001px;height:1.8px;background:#e8e8e8"></div>
<div style="left:126.6px;top:461px;width:869px;height:3.8px;background:#d7d7d7;border-radius:2px"></div>
<div style="left:126.6px;top:461px;width:611.4px;height:3.8px;background:#8e8e8e;border-radius:2px"></div>
<svg style="position:absolute;left:119px;top:461.3px" width="3" height="3.5" viewBox="0 0 3 3.5"><path d="M2.4 0.2V3.3L0.3 1.75Z" fill="#bbb"/></svg>
<svg style="position:absolute;left:1001px;top:461.3px" width="3" height="3.5" viewBox="0 0 3 3.5"><path d="M0.4 0.2V3.3L2.6 1.75Z" fill="#333"/></svg>
<div class="t" style="left:749.73px;top:482px;font-size:7.12px;color:#555555;font-weight:normal;font-style:normal;">Всего:</div>
<div class="inp" style="left:773.9px;top:477.3px;width:69.80000000000007px;height:13.3px;border-color:#e0e0e0;border-top-color:#d6d6d6"></div>
<div class="t" style="left:824.18px;top:482px;font-size:6.9px;color:#333;font-weight:normal;font-style:normal;">38,00</div>
<div class="t" style="left:848.13px;top:482px;font-size:7.12px;color:#555555;font-weight:normal;font-style:normal;">BYN</div>
<div class="t" style="left:875.12px;top:481px;font-size:7.267px;color:#555555;font-weight:normal;font-style:normal;">НДС (в т.ч.):</div>
<div class="inp" style="left:918.1px;top:477.3px;width:69.69999999999993px;height:13.3px;border-color:#e0e0e0;border-top-color:#d6d6d6"></div>
<div class="t" style="left:972.12px;top:482px;font-size:6.9px;color:#333;font-weight:normal;font-style:normal;">3,00</div>
<div class="t" style="left:992.43px;top:482px;font-size:7.12px;color:#555555;font-weight:normal;font-style:normal;">BYN</div>
<div class="t" style="left:108.26px;top:497px;font-size:6.796px;color:#2f9c57;font-weight:normal;font-style:normal;text-decoration:underline;text-decoration-color:#aad8bb;text-decoration-thickness:0.7px;text-underline-offset:0.5px">Скрыть дополнительные реквизиты</div>
<div class="t" style="left:112.66px;top:512px;font-size:6.805px;color:#555555;font-weight:normal;font-style:normal;">Счет-фактура:</div>
<div class="btn" style="left:172px;top:507.1px;width:89.5px;height:13.699999999999932px"></div>
<div class="t" style="left:179.20px;top:512px;font-size:6.815px;color:#555555;font-weight:normal;font-style:normal;">Выписать счет-фактуру</div>
<div class="t" style="left:112.65px;top:529px;font-size:6.912px;color:#555555;font-weight:normal;font-style:normal;">Состояние ЭД:</div>
<div class="t" style="left:164.04px;top:530px;font-size:5.777px;color:#3a6cc0;font-weight:normal;font-style:normal;text-decoration:underline;text-decoration-color:#c3d3ee;text-decoration-thickness:0.7px;text-underline-offset:0.5px">Не начат</div>
<div class="t" style="left:112.45px;top:545px;font-size:6.913px;color:#555555;font-weight:normal;font-style:normal;">Комментарий:</div>
<div class="inp" style="left:162.9px;top:540.3px;width:218.9px;height:13.400000000000023px;"></div>
<div class="t" style="left:387.53px;top:545px;font-size:6.761px;color:#555555;font-weight:normal;font-style:normal;">Ответственный:</div>
<div class="inp" style="left:440.3px;top:540.3px;width:218.8px;height:13.400000000000023px;"></div>
<div style="left:636.4px;top:540.8px;width:1px;height:12.600000000000023px;background:#dcdcdc"></div>
<div style="left:647.6px;top:540.8px;width:1px;height:12.600000000000023px;background:#dcdcdc"></div>
<svg style="position:absolute;left:640.4px;top:545.55px" width="3.2" height="2.2" viewBox="0 0 3.2 2.2"><path d="M0 0.2H3.2L1.6 2Z" fill="#444"/></svg>
<svg style="position:absolute;left:650.2px;top:543.3499999999999px" width="6.4" height="6.4" viewBox="0 0 6.4 6.4"><rect x="2.4" y="0.5" width="3.3" height="3.3" rx="1.1" fill="none" stroke="#7e7e7e" stroke-width="0.75"/><rect x="0.5" y="2.3" width="3.4" height="3.4" rx="1.1" fill="#fff" stroke="#7e7e7e" stroke-width="0.75"/></svg>
<div class="t" style="left:442.32px;top:545px;font-size:7.087px;color:#333;font-weight:normal;font-style:normal;">assistant</div>
</body></html>
